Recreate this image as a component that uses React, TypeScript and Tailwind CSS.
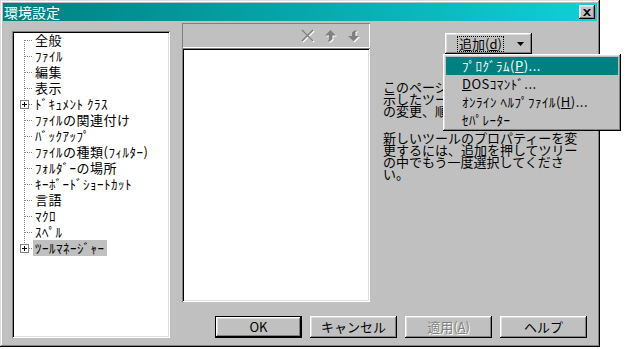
import React from "react";

const raised =
  "shadow-[inset_-1px_-1px_#000,inset_1px_1px_#fff,inset_-2px_-2px_#808080,inset_2px_2px_#dfdfdf]";
const sunken =
  "shadow-[inset_1px_1px_#808080,inset_-1px_-1px_#fff,inset_2px_2px_#000,inset_-2px_-2px_#dfdfdf]";

type Item = { label: string; plus?: boolean; selected?: boolean };

const items: Item[] = [
  { label: "全般" },
  { label: "ﾌｧｲﾙ" },
  { label: "編集" },
  { label: "表示" },
  { label: "ﾄﾞｷｭﾒﾝﾄ ｸﾗｽ", plus: true },
  { label: "ﾌｧｲﾙの関連付け" },
  { label: "ﾊﾞｯｸｱｯﾌﾟ" },
  { label: "ﾌｧｲﾙの種類(ﾌｨﾙﾀｰ)" },
  { label: "ﾌｫﾙﾀﾞｰの場所" },
  { label: "ｷｰﾎﾞｰﾄﾞｼｮｰﾄｶｯﾄ" },
  { label: "言語" },
  { label: "ﾏｸﾛ" },
  { label: "ｽﾍﾟﾙ" },
  { label: "ﾂｰﾙﾏﾈｰｼﾞｬｰ", plus: true, selected: true },
];

function Connector({ first, last, plus }: { first: boolean; last: boolean; plus?: boolean }) {
  return (
    <svg width="19" height="16" viewBox="0 0 19 16" className="shrink-0">
      <line
        x1="10.5"
        y1={first ? 8 : 0}
        x2="10.5"
        y2={last ? 8 : 16}
        stroke="#808080"
        strokeDasharray="1 1"
      />
      <line x1={plus ? 15 : 11} y1="8.5" x2="19" y2="8.5" stroke="#808080" strokeDasharray="1 1" />
      {plus && (
        <g>
          <rect x="6.5" y="4.5" width="8" height="8" fill="#fff" stroke="#808080" />
          <line x1="8" y1="8.5" x2="13" y2="8.5" stroke="#000" />
          <line x1="10.5" y1="6" x2="10.5" y2="11" stroke="#000" />
        </g>
      )}
    </svg>
  );
}

function XIcon() {
  return (
    <svg width="14" height="14" viewBox="0 0 14 14">
      <g stroke="#fff" strokeWidth="1.6">
        <line x1="2" y1="2" x2="13" y2="13" />
        <line x1="13" y1="2" x2="2" y2="13" />
      </g>
      <g stroke="#808080" strokeWidth="1.6">
        <line x1="1" y1="1" x2="12" y2="12" />
        <line x1="12" y1="1" x2="1" y2="12" />
      </g>
    </svg>
  );
}

function UpIcon() {
  const d = "M6.5 1 L12 6.5 L8.5 6.5 L8.5 10 L6 12.5 L3.5 12.5 L5 10.5 L5 6.5 L1 6.5 Z";
  return (
    <svg width="14" height="14" viewBox="0 0 14 14">
      <path d={d} fill="#fff" transform="translate(1 1)" />
      <path d={d} fill="#808080" />
    </svg>
  );
}

function DownIcon() {
  const d = "M6.5 12.5 L12 7 L8.5 7 L8.5 3.5 L10 1.5 L7.5 1.5 L5 3.5 L5 7 L1 7 Z";
  return (
    <svg width="14" height="14" viewBox="0 0 14 14">
      <path d={d} fill="#fff" transform="translate(1 1)" />
      <path d={d} fill="#808080" />
    </svg>
  );
}

export default function App() {
  return (
    <div className="w-[625px] h-[349px] bg-white font-['Noto_Sans_CJK_JP','Noto_Sans',sans-serif] text-black">
      <div className="relative w-[600px] h-[347px] bg-[#c0c0c0] flex flex-col shadow-[inset_-1px_-1px_#000,inset_1px_1px_#dfdfdf,inset_-2px_-2px_#808080,inset_2px_2px_#fff]">
        {/* Title bar */}
        <div className="mx-[3px] mt-[3px] h-[18px] flex items-center bg-linear-to-r from-[#008080] to-[#10d0d8] text-white">
          <span className="pl-[1px] text-[14px] leading-[18px]">環境設定</span>
          <div
            className={`ml-auto mr-[2px] w-[16px] h-[14px] bg-[#c0c0c0] flex items-center justify-center ${raised}`}
          >
            <svg width="8" height="7" viewBox="0 0 8 7">
              <path d="M0 0h2l2 2 2-2h2L5 3.5 8 7H6L4 5 2 7H0l3-3.5z" fill="#000" />
            </svg>
          </div>
        </div>

        {/* Body */}
        <div className="flex pl-[12px] pt-[2px]">
          {/* Tree */}
          <div className={`mt-[8px] w-[158px] h-[307px] bg-white p-[2px] ${sunken}`}>
            <div className="flex flex-col text-[13px] -mt-[1px]">
              {items.map((it, i) => (
                <div key={i} className="flex h-[16px] items-center">
                  <Connector first={i === 0} last={i === items.length - 1} plus={it.plus} />
                  <span
                    className={`px-[2px] leading-[16px] tracking-[0.5px] whitespace-nowrap ${
                      it.selected ? "bg-[#c0c0c0]" : ""
                    }`}
                  >
                    {it.label}
                  </span>
                </div>
              ))}
            </div>
          </div>

          {/* Right area */}
          <div className="ml-[12px] flex flex-col">
            <div className="flex h-[279px]">
              {/* Middle column */}
              <div className="w-[188px] flex flex-col">
                <div className="h-[25px] flex items-center justify-end gap-[9px] pr-[9px] shadow-[inset_1px_1px_#808080,inset_-1px_-1px_#fff]">
                  <XIcon />
                  <UpIcon />
                  <DownIcon />
                </div>
                <div className={`h-[254px] bg-white ${sunken}`} />
              </div>

              {/* Right panel */}
              <div className="relative ml-[13px] w-[205px]">
                <div className={`ml-[62px] mt-[10px] w-[87px] h-[21px] flex items-center ${raised}`}>
                  <div className="ml-[12px] h-[16px] px-[2px] flex items-center outline-1 outline-dotted outline-black -outline-offset-1 text-[13px] leading-[14px] whitespace-nowrap">
                    追加(<span className="underline">d</span>)
                  </div>
                  <svg width="7" height="4" viewBox="0 0 7 4" className="ml-[13px]">
                    <path d="M0 0h7L3.5 4z" fill="#000" />
                  </svg>
                </div>
                <div className="mt-[27px] text-[13px] leading-[12px] whitespace-nowrap">
                  <div>このページでは、ツールメニューに表</div>
                  <div>示したツールの追加、削除、名前</div>
                  <div>の変更、順序の変更を行います。</div>
                </div>
                <div className="mt-[15px] text-[13px] leading-[12px] whitespace-nowrap">
                  <div>新しいツールのプロパティーを変</div>
                  <div>更するには、追加を押してツリー</div>
                  <div>の中でもう一度選択してくださ</div>
                  <div>い。</div>
                </div>

                {/* Dropdown menu */}
                <div
                  className={`absolute left-[60px] top-[31px] w-[178px] bg-[#c0c0c0] p-[3px] flex flex-col text-[13px] tracking-[0.5px] ${raised}`}
                >
                  <div className="h-[18px] flex items-center pl-[16px] bg-[#008080] text-white whitespace-nowrap">
                    ﾌﾟﾛｸﾞﾗﾑ(<span className="underline">P</span>)...
                  </div>
                  <div className="h-[18px] flex items-center pl-[16px] whitespace-nowrap">
                    <span className="underline">D</span>OSｺﾏﾝﾄﾞ...
                  </div>
                  <div className="h-[18px] flex items-center pl-[16px] whitespace-nowrap">
                    ｵﾝﾗｲﾝ&nbsp;ﾍﾙﾌﾟﾌｧｲﾙ(<span className="underline">H</span>)...
                  </div>
                  <div className="h-[17px] flex items-center pl-[16px] whitespace-nowrap">ｾﾊﾟﾚｰﾀｰ</div>
                </div>
              </div>
            </div>

            {/* Bottom buttons */}
            <div className="mt-[14px] ml-[33px] flex gap-[8px] text-[13px]">
              <div className="w-[87px] h-[22px] border border-black">
                <div className={`w-full h-full flex items-center justify-center ${raised}`}>OK</div>
              </div>
              <div className={`w-[87px] h-[22px] flex items-center justify-center ${raised}`}>
                キャンセル
              </div>
              <div
                className={`w-[87px] h-[22px] flex items-center justify-center text-[#808080] [text-shadow:1px_1px_0_#fff] ${raised}`}
              >
                適用(<span className="underline">A</span>)
              </div>
              <div className={`w-[87px] h-[22px] flex items-center justify-center ${raised}`}>
                ヘルプ
              </div>
            </div>
          </div>
        </div>
      </div>
    </div>
  );
}
